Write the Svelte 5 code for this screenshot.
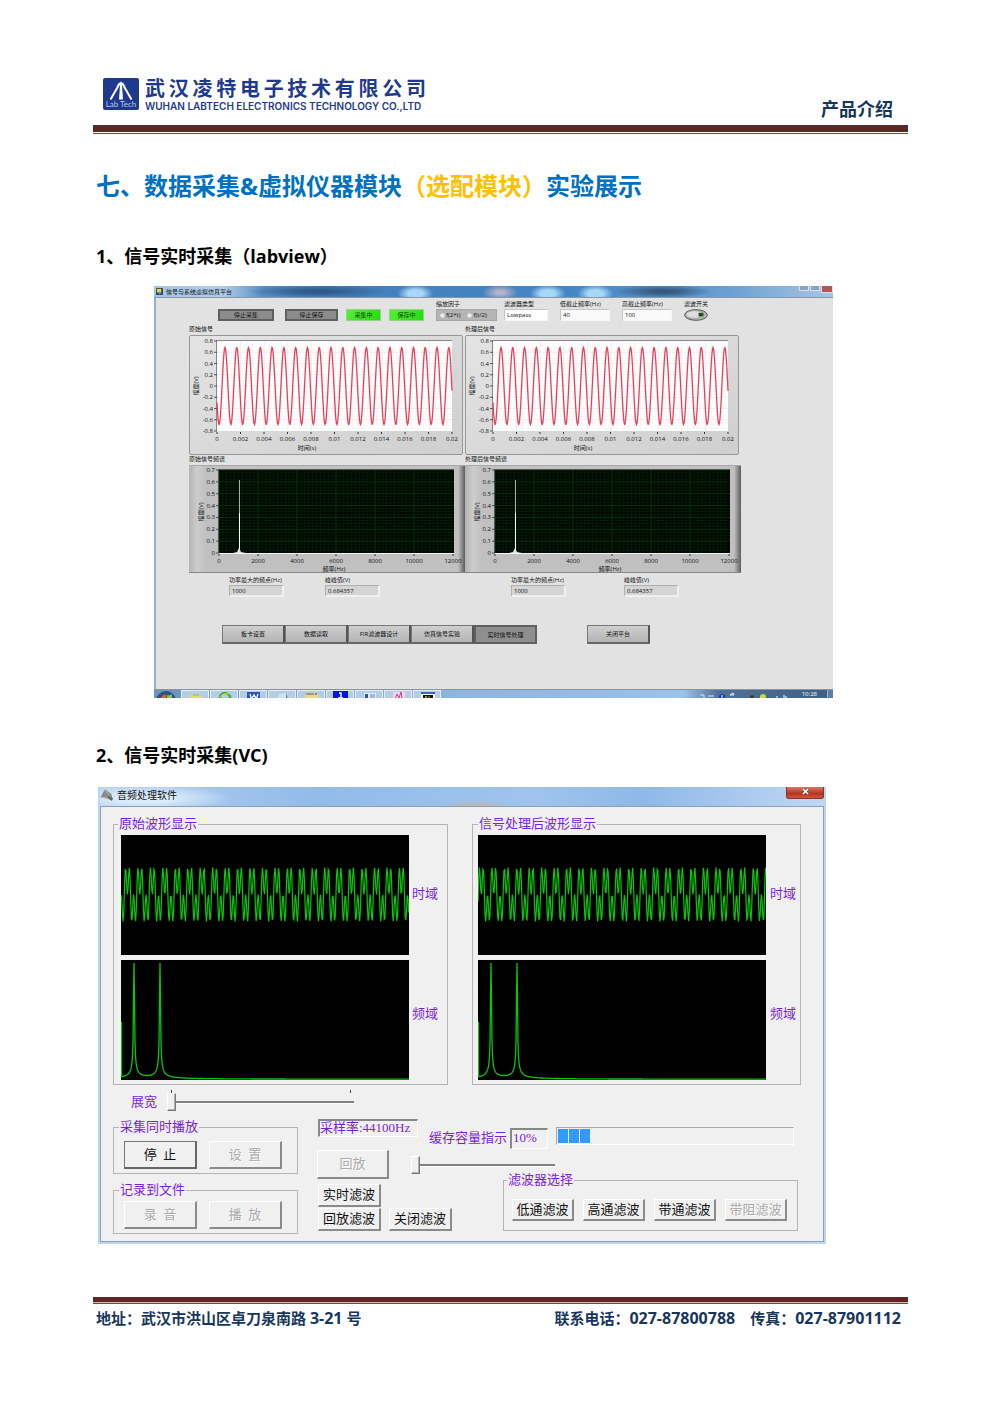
<script>
  const sinePath = (x0, x1, period, peak, mid, amp) => {
    let d = '';
    for (let x = 0; x <= x1 - x0; x += 0.5) {
      const y = mid - amp * Math.cos((2 * Math.PI * (x - peak)) / period);
      d += `${d ? 'L' : 'M'}${(x0 + x).toFixed(1)} ${y.toFixed(1)}`;
    }
    return d;
  };

  const mixPath = (shift) => {
    let d = '';
    for (let x = 0; x <= 288; x += 0.7) {
      const t = (2 * Math.PI * (x - shift)) / 12.45;
      const y = 59.5 - 17.5 * (Math.sin(t) + Math.sin(3 * t));
      d += `${d ? 'L' : 'M'}${x.toFixed(1)} ${y.toFixed(1)}`;
    }
    return d;
  };

  const peaksPath = () => {
    let d = 'M0.5 62V115';
    for (let x = 1; x <= 288; x += 0.5) {
      const h = [13, 39].reduce((s, p) => s + 36 / Math.pow(Math.max(Math.abs(x - p), 0.35), 1.15), 0);
      const y = Math.max(3, 119.3 - Math.min(h, 116.3));
      d += `L${x} ${y.toFixed(1)}`;
    }
    return d;
  };

  const wave = sinePath(28, 263, 11.78, 8, 51, 38.5);
  const peaks = peaksPath();
  const times = ['0', '0.002', '0.004', '0.006', '0.008', '0.01', '0.012', '0.014', '0.016', '0.018', '0.02'];
  const volts = ['0.8', '0.6', '0.4', '0.2', '0', '-0.2', '-0.4', '-0.6', '-0.8'];
  const freqs = ['0', '2000', '4000', '6000', '8000', '10000', '12000'];
  const mags = ['0.7', '0.6', '0.5', '0.4', '0.3', '0.2', '0.1', '0'];
  const channels = [
    { name: '原始信号', id: 'raw' },
    { name: '处理后信号', id: 'out' },
  ];
  const scopes = [
    { title: '原始波形显示', cls: 'first', d: mixPath(3.3) },
    { title: '信号处理后波形显示', cls: 'second', d: mixPath(0.2) },
  ];
  const pages = ['板卡设置', '数据读取', 'FIR滤波器设计', '仿真信号实验', '实时信号处理'];
</script>

<div class="page">
  <header>
    <div class="brand">
      <svg class="logo" viewBox="0 0 36 32" aria-hidden="true">
        <rect width="36" height="32" rx="2" fill="#1f3a8c" />
        <path d="M17 5 7.500 21.500M19 5l9.500 16.500" stroke="#fff" stroke-width="2" fill="none" />
        <path d="M17.200 5h1.600l1.200 16.500h-4z" fill="#fff" />
        <path d="M13 8 18 3.500 23 8l-3.500-1.500h-3z" fill="#fff" />
        <text x="18" y="29" text-anchor="middle" font-size="8" fill="#b9c6ee">Lab Tech</text>
      </svg>
      <div class="names">
        <div class="cn">武汉凌特电子技术有限公司</div>
        <div class="en">WUHAN LABTECH ELECTRONICS TECHNOLOGY CO.,LTD</div>
      </div>
    </div>
    <div class="doc">产品介绍</div>
  </header>
  <div class="rule top"></div>

  <main>
    <h1>七、数据采集&amp;虚拟仪器模块<em>（选配模块）</em>实验展示</h1>

    <h2 class="one">1、信号实时采集（labview）</h2>
    <section class="lab">
      <div class="lab-title">
        <svg viewBox="0 0 8 8" aria-hidden="true"><rect width="8" height="8" rx="1" fill="#345" /><path d="M1 1h5v4H1z" fill="#f5d13a" /><path d="M3 4l4 2-4 1.500z" fill="#4aa3e8" /></svg>
        <span class="cap">信号与系统虚拟仿真平台</span>
        <span class="winbtns"><i></i><i></i><i class="x"></i></span>
      </div>
      <div class="lab-body">
        <div class="controls">
          <div class="acts">
            <button class="dark w1">停止采集</button>
            <button class="dark w2">停止保存</button>
            <button class="green">采集中</button>
            <button class="green">保存中</button>
          </div>
          <div class="pair">
            <div class="field zoomf">
              <span>缩放因子</span>
              <div class="radios">
                <label><input type="radio" name="scale" />f(2*t)</label>
                <label><input type="radio" name="scale" />f(t/2)</label>
              </div>
            </div>
            <div class="field typef">
              <label for="ftype">滤波器类型</label>
              <select id="ftype"><option>Lowpass</option></select>
            </div>
          </div>
          <div class="field cut"><label for="lo">低截止频率(Hz)</label><input id="lo" value="40" /></div>
          <div class="field cut"><label for="hi">高截止频率(Hz)</label><input id="hi" value="100" /></div>
          <div class="field sw">
            <span id="swl">滤波开关</span>
            <button class="switch" aria-labelledby="swl">
              <svg viewBox="0 0 24 12" aria-hidden="true">
                <ellipse cx="12" cy="6" rx="11.3" ry="5.3" fill="#b5b5b5" stroke="#555" />
                <ellipse cx="10.500" cy="5.500" rx="8.500" ry="3.800" fill="#dedede" stroke="#999" stroke-width=".6" />
                <rect x="14.500" y="3.800" width="5" height="3.600" fill="#2c6a22" /><path d="M15.500 4v3.400l3-1.700z" fill="#173c12" />
              </svg>
            </button>
          </div>
        </div>

        <div class="plots">
          {#each channels as c}
            <figure>
              <figcaption>{c.name}</figcaption>
              <svg viewBox="0 0 276 120" role="img" aria-label={c.name}>
                <defs>
                  <linearGradient id={'g' + c.id} x1="0" y1="0" x2="1" y2="1"><stop offset="0" stop-color="#e4e4e4" /><stop offset="1" stop-color="#cfcfcf" /></linearGradient>
                </defs>
                <rect x=".5" y=".5" width="273" height="119" rx="1.5" fill={`url(#g${c.id})`} stroke="#979797" />
                <rect x="28" y="6" width="235" height="90" fill="#fff" />
                {#each Array(40) as _, i}<path d={`M${28 + i * 5.9} 6v90`} stroke={i % 4 ? '#f4f4f4' : '#e2e2e2'} stroke-width=".6" />{/each}
                {#each Array(32) as _, i}<path d={`M28 ${6 + i * 2.81}h235`} stroke={i % 4 ? '#f4f4f4' : '#e2e2e2'} stroke-width=".6" />{/each}
                <path d="M27.500 96V5.500H263" fill="none" stroke="#8a8a8a" />
                {#each volts as v, i}
                  <path d={`M25 ${6 + i * 11.25}h3`} stroke="#333" stroke-width=".8" />
                  <text x="24" y={8 + i * 11.25} text-anchor="end">{v}</text>
                {/each}
                {#each times as t, i}
                  <path d={`M${28 + i * 23.5} 97v2`} stroke="#333" />
                  <text x={28 + i * 23.5} y="106" text-anchor="middle">{t}</text>
                {/each}
                <path d={wave} fill="none" stroke="#e8405a" stroke-width="1.3" />
                <text x="118" y="115" text-anchor="middle">时间(s)</text>
                <text transform="translate(9 51) rotate(-90)" text-anchor="middle">幅度(V)</text>
              </svg>
            </figure>
          {/each}
          {#each channels as c}
            <figure>
              <figcaption>{c.name}频谱</figcaption>
              <svg viewBox="0 0 276 108" role="img" aria-label={c.name + '频谱'}>
                <defs>
                  <linearGradient id={'s' + c.id}><stop offset="0" stop-color="#b4b4b4" /><stop offset=".03" stop-color="#cdcdcd" /><stop offset=".06" stop-color="#c0c0c0" /><stop offset=".975" stop-color="#c0c0c0" /><stop offset=".985" stop-color="#999" /><stop offset="1" stop-color="#5c5c5c" /></linearGradient>
                </defs>
                <rect width="276" height="108" fill={`url(#s${c.id})`} />
                <path d="M0 .5h276" stroke="#a9a9a9" /><path d="M0 107.500h276" stroke="#888" />
                <rect x="30" y="5" width="235" height="83" fill="#000800" />
                {#each Array(60) as _, i}<path d={`M${30 + i * 3.9} 5v83`} stroke={i % 10 ? '#04210a' : '#0a4a12'} stroke-width=".7" />{/each}
                {#each Array(28) as _, i}<path d={`M30 ${5 + i * 2.97}h235`} stroke={i % 4 ? '#04210a' : '#0a4012'} stroke-width=".7" />{/each}
                <path d="M29.500 88V4.500H265" fill="none" stroke="#555" />
                <path d="M30 88.500h235" stroke="#f2f2f2" />
                <path d="M50.500 88V15" stroke="#aaa" /><path d="M50.500 88V48" stroke="#fff" /><path d="M44 88l4-1 2-4 2 4 5 1z" fill="#dfe8df" />
                {#each mags as m, i}
                  <path d={`M27 ${5 + i * 11.86}h3`} stroke="#333" stroke-width=".8" />
                  <text x="26" y={7 + i * 11.86} text-anchor="end">{m}</text>
                {/each}
                {#each freqs as f, i}
                  <path d={`M${30 + i * 39} 89v2`} stroke="#333" />
                  <text x={30 + i * 39} y="98" text-anchor="middle">{f}</text>
                {/each}
                <text x="145" y="106" text-anchor="middle">频率(Hz)</text>
                <text transform="translate(14 47) rotate(-90)" text-anchor="middle">幅度(V)</text>
              </svg>
            </figure>
          {/each}
          {#each channels as c}
            <div class={'reads ' + c.id}>
              <div class="field"><label for={'f' + c.id}>功率最大的频点(Hz)</label><input id={'f' + c.id} readonly value="1000" /></div>
              <div class="field"><label for={'p' + c.id}>峰峰值(V)</label><input id={'p' + c.id} readonly value="0.684357" /></div>
            </div>
          {/each}
        </div>

        <nav>
          {#each pages as p, i}<button class:on={i === 4}>{p}</button>{/each}
          <button class="close">关闭平台</button>
        </nav>
      </div>
      <div class="taskbar">
        <span class="orb"><svg viewBox="0 0 24 8"><circle cx="12" cy="11" r="10" fill="#2b5580" /><path d="M7 8q3-5 5-3v4z" fill="#e8622c" /><path d="M13 5q3 1 5-1v5h-5z" fill="#8cc63e" /></svg></span>
        <span class="task"><svg viewBox="0 0 16 8"><path d="M2 8V4h5l1 1h6v3z" fill="#e8d877" /><path d="M5 3h6v2H5z" fill="#9bd08a" /></svg></span>
        <span class="task"><svg viewBox="0 0 16 8"><circle cx="8" cy="7" r="5" fill="none" stroke="#49b03a" stroke-width="2.500" /><path d="M3 6q5-5 10-3" stroke="#e7d14a" fill="none" /></svg></span>
        <span class="task"><svg viewBox="0 0 16 8"><rect x="1" y="1" width="13" height="8" fill="#2a55b0" /><path d="M4 3l1.500 5L8 4l2.500 4L12 3" stroke="#fff" stroke-width="1.300" fill="none" /></svg></span>
        <span class="task"><svg viewBox="0 0 16 8"><path d="M4 3l7-1 2 6H3z" fill="#cfe6ee" /><path d="M11 2l2 6h-2z" fill="#4d8ba0" /></svg></span>
        <span class="task"><svg viewBox="0 0 16 8"><path d="M1 8V4h14v4z" fill="#f1d98a" /><path d="M2 2h3v2H2zM7 2h3v2H7z" fill="#8cae50" /><path d="M5 2h2v2H5zM11 2h2v2h-2z" fill="#d77b3b" /></svg></span>
        <span class="task"><svg viewBox="0 0 16 8"><rect width="15" height="8" fill="#0a14e0" /><path d="M6 2h2v5M5 7h5" stroke="#fff" stroke-width="1.400" fill="none" /></svg></span>
        <span class="task"><svg viewBox="0 0 16 8"><rect x="2" y="2" width="12" height="6" fill="#e7eefb" /><path d="M3 3h3v5H3z" fill="#2a55b0" /><path d="M8 4h5M8 6h5" stroke="#5b7fc4" /></svg></span>
        <span class="task"><svg viewBox="0 0 16 8"><rect x="2" y="1" width="12" height="8" fill="#f6d6ea" /><path d="M4 8l2-5 2 4 2-6 1 7" stroke="#cc3d8c" fill="none" /></svg></span>
        <span class="task"><svg viewBox="0 0 16 8"><rect x="1" y="1" width="14" height="8" fill="#fff" /><path d="M1 1h14v2H1z" fill="#3569b5" /><path d="M3 4h10v4H3z" fill="#111" /><path d="M5 8l1-3 1 3M9 5v3" stroke="#f1d94a" fill="none" stroke-width=".7" /></svg></span>
        <svg class="tray" viewBox="0 0 96 8"><path d="M2 5h4v3M10 6h6" stroke="#dfe9f3" fill="none" /><circle cx="24" cy="7" r="3" fill="#2435b8" /><path d="M24 5v3" stroke="#fff" /><path d="M32 5l3-2 1 2z" stroke="#eef" fill="none" /><circle cx="54" cy="7" r="2" fill="#5b2d2d" /><circle cx="65" cy="7" r="3" fill="#c8da3a" /><path d="M79 8V6M86 8V5M88 8V6" stroke="#fff" /></svg>
        <time>10:28</time>
        <span class="peek"></span>
      </div>
    </section>

    <h2 class="two">2、信号实时采集(VC)</h2>
    <section class="vc">
      <div class="vc-title">
        <svg viewBox="0 0 14 14" aria-hidden="true"><path d="M1 9 5 2l6 4 1 6-5-2z" fill="#8c8c8c" stroke="#707070" stroke-width=".6" /><path d="M2 9l8 2M5 3l5 4" stroke="#b5b5b5" /><path d="M8 8l5 2-1 3-4-3z" fill="#666" /></svg>
        <span>音频处理软件</span>
        <button class="vc-x" aria-label="关闭"><svg viewBox="0 0 10 8"><path d="M2 1l6 6M8 1 2 7" stroke="#5a1a12" stroke-width="3" /><path d="M2 1l6 6M8 1 2 7" stroke="#fff" stroke-width="1.800" /></svg></button>
      </div>
      <div class="vc-body">
        <div class="scopes">
          {#each scopes as s}
            <fieldset class={s.cls}>
              <legend>{s.title}</legend>
              <div class="scope">
                <svg viewBox="0 0 288 120" role="img" aria-label="时域"><rect width="288" height="120" /><path d={s.d} fill="none" stroke="#06c806" stroke-width="1.200" /></svg>
                <span class="time">时域</span>
                <svg viewBox="0 0 288 120" role="img" aria-label="频域"><rect width="288" height="120" /><path d={peaks} fill="none" stroke="#0bc40b" stroke-width="1.300" /></svg>
                <span class="freq">频域</span>
              </div>
            </fieldset>
          {/each}
        </div>

        <div class="stretch">
          <label for="stretch">展宽</label>
          <div class="slide">
            <div class="ticks"><i></i><i></i></div>
            <input id="stretch" type="range" value="0" />
          </div>
        </div>

        <div class="lower">
          <div class="left">
            <fieldset class="live">
              <legend>采集同时播放</legend>
              <div class="btns"><button class="focus">停&nbsp; 止</button><button disabled>设&nbsp; 置</button></div>
            </fieldset>
            <fieldset class="rec">
              <legend>记录到文件</legend>
              <div class="btns"><button disabled>录&nbsp; 音</button><button disabled>播&nbsp; 放</button></div>
            </fieldset>
          </div>
          <div class="right">
            <div class="status">
              <output class="rate">采样率:44100Hz</output>
              <label for="buffer">缓存容量指示</label>
              <output class="pct">10%</output>
              <progress id="buffer" value="14" max="100"></progress>
            </div>
            <div class="replay">
              <button disabled>回放</button>
              <input type="range" value="0" aria-label="回放" />
            </div>
            <div class="filters">
              <div class="modes">
                <button>实时滤波</button>
                <button class="nl">回放滤波</button>
                <button>关闭滤波</button>
              </div>
              <fieldset class="choose">
                <legend>滤波器选择</legend>
                <div class="btns"><button>低通滤波</button><button>高通滤波</button><button>带通滤波</button><button disabled>带阻滤波</button></div>
              </fieldset>
            </div>
          </div>
        </div>
      </div>
    </section>
  </main>

  <footer>
    <div class="rule bottom"></div>
    <div class="contact">
      <span>地址：武汉市洪山区卓刀泉南路 <b>3-21</b> 号</span>
      <span class="tel">联系电话：<b>027-87800788</b></span>
      <span>传真：<b>027-87901112</b></span>
    </div>
  </footer>
</div>

<style>
  :global(body) { background: #fff; }
  .page { padding: 78px 92px 80px 93px; font-family: 'Open Sans', 'Noto Sans CJK SC', sans-serif; color: #000; }
  .page :global(*) { box-sizing: border-box; }
  button, input, select { font: inherit; color: inherit; margin: 0; padding: 0; border-radius: 0; }
  button { white-space: nowrap; }
  figure, h1, h2, fieldset { margin: 0; padding: 0; min-width: 0; }
  svg { display: block; }

  header { display: flex; justify-content: space-between; height: 47px; padding: 0 15px 0 10px; }
  .brand { display: flex; gap: 6px; color: #1f3a8c; }
  .logo { width: 36px; height: 32px; font-family: Lato, sans-serif; }
  .names { width: 281px; }
  .cn { font-size: 20px; font-weight: 700; line-height: 21px; text-align-last: justify; white-space: nowrap; }
  .en { font-family: Inter, sans-serif; font-size: 10px; font-weight: 600; line-height: 14px; white-space: nowrap; }
  .doc { align-self: flex-end; margin-bottom: 4px; font-size: 18px; line-height: 24px; font-weight: 700; color: #17365d; }
  .rule.top { height: 9px; border-top: 1px solid #3a3a3a; border-bottom: 1px solid #7a4443; background: linear-gradient(#632423 6px, #fff 6px); }

  h1 { margin: 36px 0 0 3px; font-size: 24px; line-height: 32px; font-weight: 700; color: #0070c0; }
  h1 em { font-style: normal; color: #ffc000; }
  h2 { margin-left: 3px; font-size: 18px; line-height: 24px; font-weight: 700; }
  h2.one { margin-top: 42px; }
  h2.two { margin-top: 45px; }

  .lab { margin: 18px 75px 0 61px; font-size: 6px; line-height: 8px; color: #111; background: #e2e2e2; }
  .lab-title { display: flex; align-items: center; gap: 3px; height: 12px; padding-left: 2px; border-bottom: 1px solid #8797aa;
    background: radial-gradient(18px 9px at 38.5% 70%, #a8d8f8 40%, #a8d8f800), radial-gradient(18px 8px at 51% 60%, #b9b3cc 20%, #b9b3cc00), radial-gradient(18px 9px at 58% 70%, #a8d8f8 40%, #a8d8f800), radial-gradient(18px 9px at 65% 70%, #a8d8f8 40%, #a8d8f800), radial-gradient(50px 7px at 75% 50%, #34587f 20%, #34587f00), radial-gradient(70px 7px at 24% 50%, #2f5a8a 20%, #2f5a8a00), linear-gradient(90deg, #a7c3df, #b4cee8 10%, #5a90c6 16%, #4580bb 30%, #4385c4 60%, #6ba0d2 85%, #a9c6e4); }
  .lab-title svg { width: 7px; height: 7px; }
  .cap { color: #0a1626; }
  .winbtns { display: flex; gap: 1px; align-self: flex-start; margin-left: auto; }
  .winbtns i { width: 10px; height: 5px; border: 1px solid #d5e2ee; border-top: 0; background: #8aa3bf; }
  .winbtns i.x { width: 12px; height: 7px; background: #b9534e; }
  .lab-body { padding-top: 2px; border-left: 2px solid #8fb2d4; height: auto; }
  .controls { display: flex; align-items: flex-end; gap: 12px; padding-left: 62px; }
  .acts { display: flex; gap: 8px; }
  .acts button { height: 12px; line-height: 8px; border: 1px solid #555; }
  .acts .dark { border: 2px solid #5f5f5f; background: #8c8c8c; color: #111; }
  .w1 { width: 56px; margin-right: 3px; }
  .w2 { width: 53px; }
  .acts .green { width: 35px; border-color: #8fd67f; background: linear-gradient(135deg, #58f03a, #22dc0c); color: #0c3c08; }
  .pair { display: flex; align-items: flex-end; gap: 7px; }
  .field { display: flex; flex-direction: column; gap: 1px; white-space: nowrap; }
  .field > label, .field > span { height: 8px; }
  .field input, .field select { width: 100%; height: 12px; line-height: 9px; padding: 0 2px; border: 1px solid #c4c4c4; border-right-color: #f6f6f6; border-bottom-color: #f6f6f6; background: #fafafa; }
  .field select { appearance: none; background: #fff; }
  .zoomf { width: 61px; }
  .typef { width: 44px; }
  .cut { width: 50px; }
  .radios { display: flex; gap: 7px; align-items: center; height: 12px; padding-left: 3px; background: #b4b4b4; border: 1px solid #a6a6a6; }
  .radios label { display: flex; align-items: center; gap: 1px; }
  .field .radios input { appearance: none; width: 5px; height: 5px; padding: 0; border: 1px solid #ddd; border-radius: 50%; background: #eee; }
  .switch { width: 24px; height: 12px; border: 0; background: none; }
  .plots { display: grid; grid-template-columns: repeat(2, minmax(0, 276px)); padding-left: 33px; margin-top: 4px; }
  figcaption { height: 10px; line-height: 8px; }
  figure svg { width: 100%; }
  figure text { font-size: 6px; fill: #111; }
  .reads { display: flex; padding: 3px 0 0 40px; gap: 41px; }
  .reads.out { padding-left: 46px; gap: 58px; }
  .reads .field { width: 55px; }
  .reads input { background: #d4d4d4; border-width: 1px 2px 2px 1px; border-color: #b0b0b0 #f0f0f0 #f0f0f0 #b0b0b0; }
  nav { display: flex; padding: 28px 0 45px 66px; }
  nav button { width: 63px; height: 19px; border: 1px solid #777; border-right: 2px solid #555; border-bottom: 2px solid #666; background: linear-gradient(#cfcfcf, #b4b4b4); }
  nav button.on { border: 2px solid #606060; background: #8f8f8f; }
  nav .close { margin-left: 50px; }
  .taskbar { display: flex; height: 9px; overflow: hidden; border-top: 1px solid #8a949e; background: linear-gradient(90deg, #6d94bb, #8db6de 45%, #9cc2e8 78%, #4d7398 83%, #3d6084); }
  .orb { width: 27px; }
  .orb svg { width: 24px; height: 8px; }
  .task { width: 28px; margin-right: 1px; padding-left: 6px; border: 1px solid #e2edf6; border-bottom: 0; background: #b2cde4; }
  .task svg { width: 16px; height: 8px; }
  .tray { width: 96px; height: 8px; margin-left: auto; }
  time { margin: 0 10px 0 8px; color: #fff; line-height: 8px; }
  .peek { width: 6px; border-left: 1px solid #9db4cb; background: #5d7fa3; }

  .vc { margin: 20px 82px 0 5px; border: solid #b9d6f2; border-width: 0 2px 2px; font-family: 'Liberation Serif', 'Noto Sans CJK SC', serif; font-size: 13px; line-height: 14px; color: #111; }
  .vc-title { display: flex; align-items: center; gap: 3px; height: 19px; padding-bottom: 4px; background: radial-gradient(90px 14px at 6% 60%, #dcebfa 30%, #dcebfa00), radial-gradient(32px 5px at 52% 100%, #b3b9c2 60%, #b3b9c200), linear-gradient(90deg, #b2cfee, #93bbe9 30%, #9fc3ec 60%, #8fb8e8 75%, #c0d8f2); }
  .vc-title > svg { width: 14px; height: 14px; }
  .vc-title span { font-size: 10px; line-height: 14px; font-family: 'Noto Sans CJK SC', sans-serif; }
  .vc-x { display: flex; justify-content: center; align-self: flex-start; width: 38px; height: 12px; padding-top: 1px; margin-left: auto; border: 1px solid #77392f; border-top: 0; border-radius: 0 0 3px 3px; background: linear-gradient(#d8796a, #b83220 60%, #d0583f); }
  .vc-x svg { width: 9px; height: 7px; }
  .vc-body { padding: 10px 12px 7px; border: 1px solid #8d9fb3; background: #f0f0f0; }
  fieldset { border: 1px solid #b4b4b4; }
  legend { height: 14px; line-height: 14px; margin-left: -3px; padding: 0 1px; }
  legend, .scope span, .stretch label, .status { color: #7a1fdc; white-space: nowrap; }
  .scopes { display: flex; gap: 24px; }
  .first { flex: 0 1 335px; padding: 4px 7px; }
  .second { flex: 0 1 329px; padding: 4px 4px 4px 5px; }
  .second legend { margin-left: 0; }
  .scope { display: grid; grid-template-columns: minmax(0, 288px) 26px; gap: 5px 4px; align-items: center; }
  .first .scope { column-gap: 3px; }
  .scope svg { width: 100%; }
  .scope .time { padding-bottom: 3px; }
  .scope .freq { padding-bottom: 13px; }
  .stretch { display: flex; align-items: center; gap: 10px; padding: 5px 0 0 18px; }
  .stretch label { margin-top: 3px; }
  .slide { width: 187px; }
  .ticks { display: flex; justify-content: space-between; padding: 0 3px 0 4px; }
  .ticks i { width: 1px; height: 3px; background: #444; }
  input[type='range'] { appearance: none; display: block; width: 100%; height: 18px; background: linear-gradient(#0000 8px, #808080 8px, #808080 10px, #fff 10px, #fff 11px, #0000 11px); }
  input[type='range']::-webkit-slider-thumb { appearance: none; width: 9px; height: 18px; border: 1px solid #fff; border-right-color: #777; border-bottom-color: #777; background: #f0f0f0; box-shadow: inset -1px -1px #b0b0b0; }
  .lower { display: flex; gap: 19px; margin-top: 8px; }
  .lower legend { margin-left: -5px; }
  .left { display: flex; flex-direction: column; gap: 9px; flex: 0 0 185px; margin-top: 1px; }
  .live { padding: 7px 10px 4px; }
  .rec { padding: 4px 10px; }
  .btns { display: flex; gap: 12px; }
  .vc-body button { border: 1px solid #fff; border-right: 2px solid #8a8a8a; border-bottom: 2px solid #8a8a8a; background: #f0f0f0; }
  .left button { width: 73px; height: 28px; }
  .vc-body button.focus { border: 1px solid #777; border-right: 2px solid #666; border-bottom: 2px solid #666; }
  .vc-body button:disabled { color: #aaa; text-shadow: 1px 1px #fff; }
  .right { flex: 0 1 481px; min-width: 0; }
  .status { display: flex; align-items: flex-end; height: 30px; }
  output { border: 1px solid #fff; border-top: 2px solid #888; border-left: 2px solid #888; }
  .rate { align-self: flex-start; width: 100px; height: 18px; line-height: 13px; margin: 0 11px 0 1px; }
  .status label { line-height: 22px; margin-right: 3px; }
  .pct { width: 38px; height: 21px; line-height: 16px; padding-left: 1px; }
  progress { appearance: none; flex: 1; min-width: 0; height: 18px; margin: 0 4px 4px 8px; padding: 1px; border: 1px solid #a8a8a8; border-right-color: #fff; border-bottom-color: #fff; background: #f0f0f0; }
  progress::-webkit-progress-bar { background: #f0f0f0; }
  progress::-webkit-progress-value { background: repeating-linear-gradient(90deg, #3399ff 0, #3399ff 10px, #f0f0f0 10px, #f0f0f0 11px); }
  .replay { display: flex; align-items: center; gap: 22px; margin-top: 1px; }
  .replay button { width: 72px; height: 29px; }
  .replay input { width: 144px; }
  .filters { display: flex; justify-content: space-between; margin-top: 5px; }
  .modes { display: grid; grid-template-columns: 63px 63px; gap: 1px 8px; align-content: start; margin-left: 1px; }
  .modes button { height: 23px; }
  .nl { grid-column: 1; }
  .choose { margin-top: -11px; padding: 12px 10px 8px 8px; }
  .choose .btns { gap: 9px; }
  .choose button { width: 62px; height: 22px; }

  footer { margin-top: 53px; }
  .rule.bottom { height: 7px; border-bottom: 1px solid #7a4443; background: linear-gradient(#632423 5px, #c9bdb5 5px); }
  .contact { display: flex; gap: 15px; padding: 3px 7px 0 3px; font-size: 15px; line-height: 22px; font-weight: 700; color: #17365d; white-space: nowrap; }
  .contact b { font-size: 16px; font-weight: 700; }
  .tel { margin-left: auto; }
</style>
